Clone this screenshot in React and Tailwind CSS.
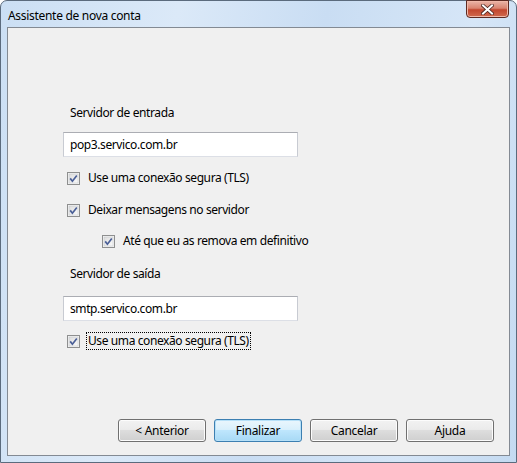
import React from 'react';

const font = { fontFamily: '"Noto Sans", "Segoe UI", sans-serif' };

const Check = () => (
  <svg width="13" height="13" viewBox="0 0 13 13" className="shrink-0">
    <defs>
      <linearGradient id="cbg" x1="0" y1="0" x2="1" y2="1">
        <stop offset="0" stopColor="#dcdcdc" />
        <stop offset="1" stopColor="#fbfbfb" />
      </linearGradient>
    </defs>
    <rect x="0.5" y="0.5" width="12" height="12" fill="#f4f4f4" stroke="#8e8f8f" />
    <rect x="2" y="2" width="9" height="9" fill="url(#cbg)" stroke="#c0c4c8" strokeWidth="0.5" />
    <path d="M3.2 6.4 L5.4 9.2 L9.8 3.4" fill="none" stroke="#4a5f97" strokeWidth="1.7" />
  </svg>
);

const CheckRow = ({ label, focus, className = '' }) => (
  <div className={`flex items-center gap-[7px] h-4 ${className}`}>
    <Check />
    <span
      className={`text-[12px] leading-[16px] tracking-[-0.4px] text-black px-px ${focus ? 'outline-1 outline-dotted outline-black' : ''}`}
    >
      {label}
    </span>
  </div>
);

const Field = ({ value, className = '' }) => (
  <div
    className={`w-[235px] h-[25px] bg-white border border-[#abadb3] border-b-[#dcdfe6] border-l-[#c8cbd2] border-r-[#c8cbd2] flex items-center pl-[6px] text-[12px] tracking-[-0.4px] text-black ${className}`}
  >
    {value}
  </div>
);

const Button = ({ label, focused }) => (
  <div
    className={`w-[88px] h-[23px] rounded-[3px] border flex items-center justify-center text-[12px] tracking-[-0.3px] text-black ${
      focused
        ? 'border-[#3c7fb1] bg-[linear-gradient(#eaf6fd_0%,#d9f0fc_45%,#bee6fd_50%,#a7d9f5_100%)] shadow-[inset_0_0_0_1px_#b6e0f8]'
        : 'border-[#707070] bg-[linear-gradient(#f2f2f2_0%,#ebebeb_45%,#dddddd_50%,#cfcfcf_100%)] shadow-[inset_0_0_0_1px_#fcfcfc]'
    }`}
  >
    {label}
  </div>
);

export default function App() {
  return (
    <div className="w-[517px] h-[463px] bg-white" style={font}>
      <div className="w-[517px] h-[463px] rounded-t-[7px] border border-[#5b6b7d] bg-[linear-gradient(100deg,#cbdff4_0%,#dbe9f8_30%,#c9ddf3_55%,#d6e6f7_80%,#c4daf1_100%)] flex flex-col px-[6px] pb-[6px]">
        <div className="h-[26px] flex items-start justify-between relative">
          <span className="text-[12px] leading-[16px] tracking-[-0.3px] text-black mt-[7px] ml-px">Assistente de nova conta</span>
          <div className="w-[43px] h-[18px] -mt-px mr-px rounded-b-[4px] border border-[#5d2a22] bg-[linear-gradient(#eab5a8_0%,#d98470_45%,#c2472f_55%,#d06a4e_100%)] shadow-[inset_0_0_0_1px_#f0b8a8] flex items-center justify-center">
            <svg width="13" height="11" viewBox="0 0 13 11">
              <path d="M2 1.5 L11 9.5 M11 1.5 L2 9.5" stroke="#4a2520" strokeWidth="3.6" strokeLinecap="square" />
              <path d="M2 1.5 L11 9.5 M11 1.5 L2 9.5" stroke="#ffffff" strokeWidth="2" strokeLinecap="square" />
            </svg>
          </div>
        </div>
        <div className="flex-1 bg-[#f0f0f0] border border-[#838a93] flex flex-col">
          <div className="pl-[62px] mt-[77px] text-[12px] leading-[16px] tracking-[-0.4px] text-black">Servidor de entrada</div>
          <Field value="pop3.servico.com.br" className="ml-[55px] mt-[11px]" />
          <CheckRow label="Use uma conexão segura (TLS)" className="ml-[59px] mt-[13px]" />
          <CheckRow label="Deixar mensagens no servidor" className="ml-[59px] mt-[16px]" />
          <CheckRow label="Até que eu as remova em definitivo" className="ml-[94px] mt-[15px]" />
          <div className="pl-[62px] mt-[17px] text-[12px] leading-[16px] tracking-[-0.4px] text-black">Servidor de saída</div>
          <Field value="smtp.servico.com.br" className="ml-[55px] mt-[14px]" />
          <CheckRow label="Use uma conexão segura (TLS)" focus className="ml-[59px] mt-[12px]" />
          <div className="mt-auto mb-[13px] mr-[15px] flex justify-end gap-[8px]">
            <Button label="< Anterior" />
            <Button label="Finalizar" focused />
            <Button label="Cancelar" />
            <Button label="Ajuda" />
          </div>
        </div>
      </div>
    </div>
  );
}
